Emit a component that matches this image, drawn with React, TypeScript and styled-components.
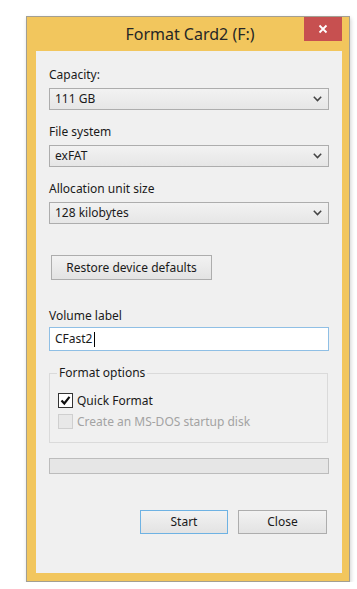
import React from "react";
import styled, { createGlobalStyle } from "styled-components";

const GlobalStyle = createGlobalStyle`
  html, body { margin: 0; padding: 0; background: #ffffff; }
  body { font-family: "Noto Sans", "Open Sans", sans-serif; font-size: 12px; color: #1a1a1a; }
  * { box-sizing: border-box; }
`;

const Page = styled.div`
  padding: 16px 0 0 26px;
`;

const Window = styled.div`
  width: 324px;
  border: 1px solid #a39f92;
  background: #f2c65d;
  padding: 0 7px 8px 9px;
  box-shadow: 1px 2px 4px rgba(0, 0, 0, 0.18);
`;

const TitleBar = styled.div`
  height: 34px;
  display: grid;
  grid-template-columns: 1fr auto 1fr;
  align-items: start;
`;

const Title = styled.div`
  grid-column: 2;
  font-size: 16px;
  line-height: 34px;
  color: #262626;
  padding-left: 2px;
`;

const CloseButton = styled.div`
  grid-column: 3;
  justify-self: end;
  width: 38px;
  height: 24px;
  background: #c75050;
  display: flex;
  align-items: center;
  justify-content: center;
`;

const Client = styled.div`
  background: #f0f0f0;
  height: 522px;
  padding: 16px 13px 0 13px;
  display: flex;
  flex-direction: column;
`;

const FieldList = styled.div`
  display: flex;
  flex-direction: column;
  gap: 14px;
`;

const Field = styled.div<{ $gap: number }>`
  display: flex;
  flex-direction: column;
  gap: ${(p) => p.$gap}px;
`;

const Label = styled.div`
  line-height: 16px;
  color: #1a1a1a;
`;

const Select = styled.div`
  height: 22px;
  border: 1px solid #adadad;
  background: linear-gradient(#f2f2f2, #e6e6e6);
  display: flex;
  align-items: center;
  justify-content: space-between;
  padding: 0 6px 0 5px;
  line-height: 16px;
`;

const PushButton = styled.div<{ $default?: boolean; $width: number }>`
  width: ${(p) => p.$width}px;
  height: 24px;
  border: 1px solid ${(p) => (p.$default ? "#6eb2e3" : "#adadad")};
  background: linear-gradient(#f2f2f2, #e3e3e3);
  display: flex;
  align-items: center;
  justify-content: center;
  line-height: 16px;
  color: #1a1a1a;
`;

const RestoreButton = styled(PushButton)`
  height: 25px;
  margin: 31px 0 0 2px;
`;

const VolumeField = styled(Field)`
  margin-top: 28px;
`;

const TextInput = styled.div`
  height: 24px;
  border: 1px solid #8fbfe5;
  background: #ffffff;
  display: flex;
  align-items: center;
  padding-left: 5px;
  line-height: 16px;
`;

const Caret = styled.span`
  display: inline-block;
  width: 1px;
  height: 15px;
  background: #000;
  margin-left: 1px;
`;

const GroupBox = styled.fieldset`
  margin: 14px 1px 0 0;
  padding: 9px 7px 11px 7px;
  border: 1px solid #dadada;
  min-inline-size: 0;
  display: flex;
  flex-direction: column;
  gap: 1px;
`;

const Legend = styled.legend`
  padding: 0 2px;
  line-height: 16px;
  color: #1a1a1a;
`;

const CheckRow = styled.div<{ $disabled?: boolean }>`
  height: 20px;
  display: flex;
  align-items: center;
  gap: 4px;
  color: ${(p) => (p.$disabled ? "#a3a3a3" : "#1a1a1a")};
  padding-left: 1px;
`;

const CheckBox = styled.div<{ $disabled?: boolean }>`
  width: 15px;
  height: 15px;
  border: 1px solid ${(p) => (p.$disabled ? "#cfcfcf" : "#333333")};
  background: ${(p) => (p.$disabled ? "#e8e8e8" : "#ffffff")};
  display: flex;
  align-items: center;
  justify-content: center;
`;

const Progress = styled.div`
  margin-top: 15px;
  height: 16px;
  border: 1px solid #bcbcbc;
  background: #e6e6e6;
`;

const ButtonRow = styled.div`
  margin-top: 36px;
  display: flex;
  justify-content: flex-end;
  gap: 10px;
  padding-right: 2px;
`;

const Chevron = () => (
  <svg width="9" height="6" viewBox="0 0 9 6">
    <path d="M0.8 0.8 L4.5 4.6 L8.2 0.8" fill="none" stroke="#444" strokeWidth="1.5" />
  </svg>
);

const CloseGlyph = () => (
  <svg width="10" height="10" viewBox="0 0 10 10">
    <path d="M1.5 1.5 L8.5 8.5 M8.5 1.5 L1.5 8.5" stroke="#ffffff" strokeWidth="1.8" />
  </svg>
);

const CheckMark = () => (
  <svg width="11" height="11" viewBox="0 0 11 11">
    <path d="M1.5 5.5 L4.3 8.5 L9.5 1.8" fill="none" stroke="#111" strokeWidth="2.2" />
  </svg>
);

const selects = [
  { label: "Capacity:", value: "111 GB" },
  { label: "File system", value: "exFAT" },
  { label: "Allocation unit size", value: "128 kilobytes" },
];

export default function App() {
  return (
    <>
      <GlobalStyle />
      <Page>
        <Window>
          <TitleBar>
            <Title>Format Card2 (F:)</Title>
            <CloseButton>
              <CloseGlyph />
            </CloseButton>
          </TitleBar>
          <Client>
            <FieldList>
              {selects.map((s) => (
                <Field $gap={5} key={s.label}>
                  <Label>{s.label}</Label>
                  <Select>
                    <span>{s.value}</span>
                    <Chevron />
                  </Select>
                </Field>
              ))}
            </FieldList>
            <RestoreButton $width={161}>Restore device defaults</RestoreButton>
            <VolumeField $gap={3}>
              <Label>Volume label</Label>
              <TextInput>
                CFast2
                <Caret />
              </TextInput>
            </VolumeField>
            <GroupBox>
              <Legend>Format options</Legend>
              <CheckRow>
                <CheckBox>
                  <CheckMark />
                </CheckBox>
                Quick Format
              </CheckRow>
              <CheckRow $disabled>
                <CheckBox $disabled />
                Create an MS-DOS startup disk
              </CheckRow>
            </GroupBox>
            <Progress />
            <ButtonRow>
              <PushButton $default $width={88}>Start</PushButton>
              <PushButton $width={89}>Close</PushButton>
            </ButtonRow>
          </Client>
        </Window>
      </Page>
    </>
  );
}
